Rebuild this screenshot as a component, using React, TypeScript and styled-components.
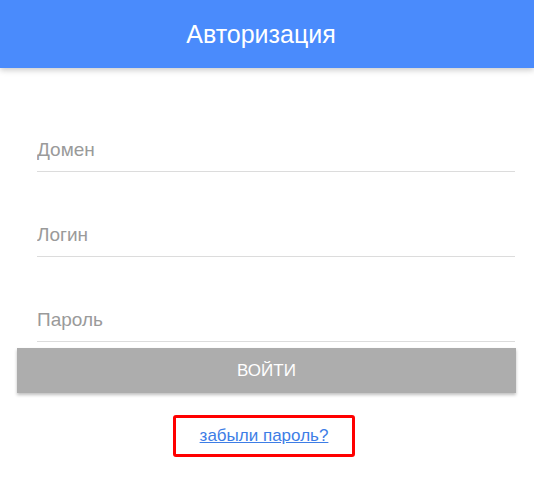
import React from 'react';
import styled, { createGlobalStyle } from 'styled-components';

const Global = createGlobalStyle`
  body {
    margin: 0;
    background: #fff;
    font-family: 'Liberation Sans', Arial, sans-serif;
  }
`;

const S = {
  Page: styled.div`
    width: 534px;
    min-height: 490px;
    background: #fff;
  `,
  Header: styled.header`
    height: 68px;
    background: #4a8bfc;
    color: #fff;
    display: flex;
    align-items: center;
    justify-content: center;
    padding-right: 12px;
    font-size: 25px;
    box-shadow: 0 2px 6px rgba(0, 0, 0, 0.22);
    position: relative;
  `,
  Form: styled.form`
    display: flex;
    flex-direction: column;
    padding: 19px 18px 0 17px;
  `,
  Field: styled.label`
    display: flex;
    align-items: flex-end;
    margin-left: 20px;
    margin-right: 1px;
    border-bottom: 1px solid #dcdcdc;
    padding-bottom: 10px;
    height: 74px;
  `,
  Input: styled.input`
    width: 100%;
    border: none;
    outline: none;
    padding: 0;
    background: transparent;
    font-family: inherit;
    font-size: 19px;
    line-height: 22px;
    height: 22px;
    color: #333;
    &::placeholder {
      color: #9a9a9a;
    }
  `,
  Button: styled.button`
    margin-top: 6px;
    height: 45px;
    border: none;
    background: #adadad;
    color: #fff;
    font-family: inherit;
    font-size: 17px;
    text-transform: uppercase;
    box-shadow: 0 2px 3px rgba(0, 0, 0, 0.25);
    cursor: pointer;
  `,
  Forgot: styled.div`
    display: flex;
    justify-content: center;
    margin-top: 22px;
    padding-right: 5px;
  `,
  Highlight: styled.div`
    width: 176px;
    height: 36px;
    border: 3px solid #ff0000;
    border-radius: 3px;
    display: flex;
    align-items: center;
    justify-content: center;
  `,
  Link: styled.a`
    color: #3d7de6;
    font-size: 17px;
    text-decoration: underline;
  `,
};

export default function App() {
  return (
    <S.Page>
      <Global />
      <S.Header>Авторизация</S.Header>
      <S.Form onSubmit={(e) => e.preventDefault()}>
        <S.Field>
          <S.Input placeholder='Домен' />
        </S.Field>
        <S.Field>
          <S.Input placeholder='Логин' />
        </S.Field>
        <S.Field>
          <S.Input type='password' placeholder='Пароль' />
        </S.Field>
        <S.Button type='submit'>Войти</S.Button>
        <S.Forgot>
          <S.Highlight>
            <S.Link href='#'>забыли пароль?</S.Link>
          </S.Highlight>
        </S.Forgot>
      </S.Form>
    </S.Page>
  );
}
